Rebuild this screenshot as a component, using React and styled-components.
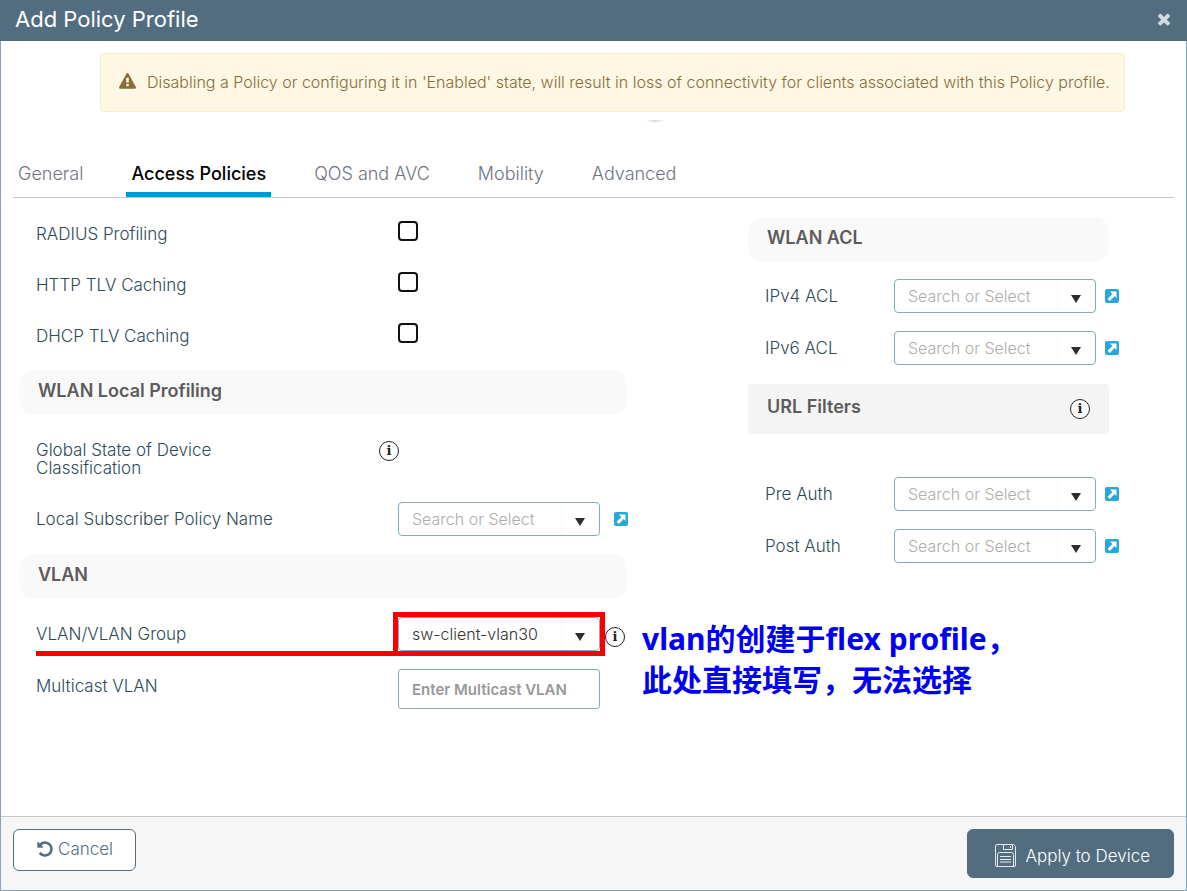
import React from "react";
import styled, { createGlobalStyle } from "styled-components";

const GlobalStyle = createGlobalStyle`
  *, *::before, *::after { box-sizing: border-box; }
  body { margin: 0; background: #fff; font-family: Inter, "Noto Sans CJK SC", sans-serif; font-weight: 300; }
  button, input, select { font: inherit; margin: 0; }
`;

const Dialog = styled.div`
  min-height: 100vh;
  display: flex;
  flex-direction: column;
  border: 1px solid #8aa1ba;
  border-top: 0;
`;

const Header = styled.header`
  height: 41px;
  margin: 0 -1px;
  padding: 0 14px 4px 15px;
  display: flex;
  align-items: center;
  justify-content: space-between;
  background: #526d80;
  color: #fff;
`;

const Title = styled.h1`
  margin: 0;
  font-size: 22px;
  line-height: 28px;
  font-weight: 400;
`;

const CloseButton = styled.button`
  border: 0;
  padding: 0;
  display: flex;
  background: none;
  color: #d3dae0;
  cursor: pointer;
`;

const Alert = styled.div`
  margin: 12px 61px 0 99px;
  min-height: 59px;
  padding: 0 10px 2px 18px;
  display: flex;
  align-items: center;
  gap: 11px;
  border: 1px solid #faebcc;
  border-radius: 4px;
  background: #fdf7e3;
  color: #8a6d3b;
  font-size: 16px;
  line-height: 24px;

  svg { flex: none; }
`;

const PullHandle = styled.div`
  width: 20px;
  height: 3px;
  margin: 8px 0 35px 644px;
  background: radial-gradient(ellipse at top, #cfcfcf, #fff 70%);
`;

const Tabs = styled.nav`
  margin: 0 12px;
  display: flex;
  gap: 38px;
  border-bottom: 1px solid #c4c7cb;
`;

const Tab = styled.a`
  height: 39px;
  padding: 0 5px;
  border-bottom: 5px solid ${(p) => (p.$active ? "#0096d6" : "transparent")};
  color: ${(p) => (p.$active ? "#000" : "#6f7580")};
  font-size: 18px;
  line-height: 32px;
  font-weight: ${(p) => (p.$active ? 500 : 300)};
  text-decoration: none;
`;

const Content = styled.main`
  flex: 1;
  padding: 0 67px 0 18px;
  display: grid;
  grid-template-columns: minmax(0, 608fr) minmax(0, 371fr);
  gap: 121px;
  align-items: start;
`;

const Column = styled.div`
  display: flex;
  flex-direction: column;
  padding-top: ${(p) => p.$top}px;
`;

const Section = styled.h2`
  margin: ${(p) => p.$margin};
  height: ${(p) => (p.$square ? 50 : 45)}px;
  padding: ${(p) => (p.$square ? 12 : 10)}px 19px 0;
  display: flex;
  justify-content: space-between;
  align-items: flex-start;
  border-radius: ${(p) => (p.$square ? 4 : 15)}px;
  background: ${(p) => (p.$square ? "#f4f4f4" : "#f9f9f9")};
  color: #5d5b5b;
  font-size: 18px;
  line-height: 22px;
  font-weight: 600;
`;

const Row = styled.div`
  position: relative;
  display: grid;
  grid-template-columns: ${(p) => (p.$narrow ? 129 : 362)}px 202px auto;
  justify-content: start;
  min-height: 34px;
  padding-left: 17px;
  align-items: ${(p) => p.$align || "center"};
`;

const CheckRow = styled(Row)`
  height: 51px;
`;

const StateRow = styled(Row)`
  grid-template-columns: 343px auto;
  min-height: 61px;
`;

const Stack = styled.div`
  display: grid;
  gap: 18px;
`;

const Label = styled.label`
  max-width: 245px;
  padding-top: ${(p) => p.$top || 0}px;
  color: #2f4a57;
  font-size: 17px;
  line-height: 18px;
`;

const Check = styled.input`
  appearance: none;
  width: 20px;
  height: 20px;
  margin-bottom: 6px;
  border: 2px solid #111;
  border-radius: 4px;
  background: #fff;
`;

const Field = styled.div`
  position: relative;
`;

const Select = styled.select`
  display: block;
  appearance: none;
  width: 100%;
  height: 34px;
  padding: 0 40px 0 13px;
  border: 1px solid #85aabd;
  border-radius: 4px;
  background: linear-gradient(#f9f9f9, #f9f9f9) 162px 0 / 1px 100% no-repeat #fff;
  color: ${(p) => (p.$filled ? "#333" : "#adadad")};
  font-size: 16px;
`;

const Arrow = styled.span`
  position: absolute;
  right: 15px;
  top: 16px;
  border: 5px solid transparent;
  border-top: 8px solid #2d2d2d;
  border-bottom: 0;
  pointer-events: none;
`;

const TextInput = styled.input`
  width: 100%;
  height: 40px;
  padding: 0 13px;
  border: 1px solid #85aabd;
  border-radius: 3px;
  background: #fff;
  font-size: 15px;
  &::placeholder { color: #999; opacity: 1; font-weight: 600; }
`;

const IconLink = styled.a`
  display: flex;
  width: 14px;
  margin-left: ${(p) => (p.$narrow ? 9 : 14)}px;
`;

const InfoButton = styled.button`
  width: 20px;
  height: 20px;
  padding: 0;
  border: 1px solid #222;
  border-radius: 50%;
  background: #fff;
  color: #222;
  font: bold 13px/16px "DejaVu Serif", serif;
`;

const SectionInfo = styled(InfoButton)`
  margin-top: 3px;
`;

const VlanInfo = styled(InfoButton)`
  margin: 6px 0 0 5px;
`;

const Highlight = styled.span`
  position: absolute;
  inset: -5px;
  border: 5px solid #fb0000;
  pointer-events: none;
`;

const Underline = styled.span`
  position: absolute;
  left: 17px;
  bottom: -5px;
  width: 362px;
  height: 5px;
  background: #fb0000;
`;

const Note = styled.p`
  position: absolute;
  left: 623px;
  top: 1px;
  margin: 0;
  color: #0000f8;
  font: bold 30px/41px "Noto Sans", "Noto Sans CJK SC", sans-serif;
  white-space: nowrap;
`;

const Footer = styled.footer`
  padding: 12px;
  display: flex;
  justify-content: space-between;
  align-items: flex-start;
  border-top: 1px solid #c4c7cb;
  background: #f6f6f6;
`;

const Button = styled.button`
  height: ${(p) => (p.$primary ? 49 : 42)}px;
  padding: ${(p) => (p.$primary ? "4px 23px 0 27px" : "0 22px 2px")};
  display: flex;
  align-items: center;
  gap: ${(p) => (p.$primary ? 10 : 4)}px;
  border: 1px solid #526d80;
  border-radius: 6px;
  background: ${(p) => (p.$primary ? "#526d80" : "#fff")};
  color: ${(p) => (p.$primary ? "#fff" : "#526d80")};
  font-size: 17px;
  line-height: 22px;

  svg { flex: none; }
`;

const FaIcon = ({ size, d }) => (
  <svg width={size} height={size} viewBox="0 0 1792 1792" fill="currentColor" aria-hidden="true">
    <path d={d} />
  </svg>
);

const TIMES =
  "M1490 1322q0 40-28 68l-136 136q-28 28-68 28t-68-28l-294-294-294 294q-28 28-68 28t-68-28l-136-136q-28-28-28-68t28-68l294-294-294-294q-28-28-28-68t28-68l136-136q28-28 68-28t68 28l294 294 294-294q28-28 68-28t68 28l136 136q28 28 28 68t-28 68l-294 294 294 294q28 28 28 68z";
const UNDO =
  "M1664 896q0 156-61 298t-164 245-245 164-298 61q-172 0-327-72.5t-264-204.5q-7-10-6.5-22.5t8.5-20.5l137-138q10-9 25-9 16 2 23 12 73 95 179 147t225 52q104 0 198.5-40.5t163.5-109.5 109.5-163.5 40.5-198.5-40.5-198.5-109.5-163.5-163.5-109.5-198.5-40.5q-98 0-188 35.5t-160 101.5l137 138q31 30 14 69-17 40-59 40h-448q-26 0-45-19t-19-45v-448q0-42 40-59 39-17 69 14l130 129q107-101 244.5-156.5t284.5-55.5q156 0 298 61t245 164 164 245 61 298z";
const WARNING =
  "M1024 1375v-190q0-14-9.5-23.5t-22.5-9.5h-192q-13 0-22.5 9.5t-9.5 23.5v190q0 14 9.5 23.5t22.5 9.5h192q13 0 22.5-9.5t9.5-23.5zm-2-374l18-459q0-12-10-19-13-11-24-11h-220q-11 0-24 11-10 7-10 21l17 457q0 10 10 16.5t24 6.5h185q14 0 23.5-6.5t10.5-16.5zm-14-934l768 1408q35 63-2 126-17 29-46.5 46t-63.5 17h-1536q-34 0-63.5-17t-46.5-46q-37-63-2-126l768-1408q17-31 47-49t65-18 65 18 47 49z";

const OpenLink = ({ label, narrow }) => (
  <IconLink href="#" aria-label={label} $narrow={narrow}>
    <svg width="14" height="14" viewBox="0 0 14 14" aria-hidden="true">
      <rect width="14" height="14" rx="2" fill="#28a8d8" />
      <path d="M5 2.500h6.500V9L9.600 7.100l-4.800 4.800-2.200-2.200 4.800-4.800z" fill="#fff" />
    </svg>
  </IconLink>
);

const SaveIcon = () => (
  <svg width="21" height="23" viewBox="0 0 21 23" fill="none" stroke="#e6ebee" aria-hidden="true">
    <path d="M.5 2a1.500 1.500 0 0 1 1.500-1.500H18.500L20.500 2.500V21a1.500 1.500 0 0 1-1.500 1.500H2A1.500 1.500 0 0 1 .5 21z" />
    <path d="M8.500.5v5h9V.5M15.500 2v2M2.500 22V10.500a2 2 0 0 1 2-2h12a2 2 0 0 1 2 2V22M5 12.500h11M5 15.500h11M5 18h11" />
  </svg>
);

const Combo = ({ id, value, children }) => (
  <Field>
    <Select id={id} $filled={!!value}>
      <option>{value || "Search or Select"}</option>
    </Select>
    <Arrow />
    {children}
  </Field>
);

const ComboRow = ({ id, label, narrow }) => (
  <Row $narrow={narrow}>
    <Label htmlFor={id}>{label}</Label>
    <Combo id={id} />
    <OpenLink label={`Open ${label}`} narrow={narrow} />
  </Row>
);

const TABS = ["General", "Access Policies", "QOS and AVC", "Mobility", "Advanced"];
const CHECKS = ["RADIUS Profiling", "HTTP TLV Caching", "DHCP TLV Caching"];

export default function App() {
  return (
    <>
      <GlobalStyle />
      <Dialog role="dialog" aria-label="Add Policy Profile">
        <Header>
          <Title>Add Policy Profile</Title>
          <CloseButton aria-label="Close"><FaIcon size={18} d={TIMES} /></CloseButton>
        </Header>
        <Alert role="alert">
          <FaIcon size={17} d={WARNING} />
          <span>Disabling a Policy or configuring it in 'Enabled' state, will result in loss of connectivity for clients associated with this Policy profile.</span>
        </Alert>
        <PullHandle />
        <Tabs>
          {TABS.map((t, i) => (
            <Tab key={t} href="#" $active={i === 1}>{t}</Tab>
          ))}
        </Tabs>
        <Content>
          <Column $top={10}>
            {CHECKS.map((t, i) => (
              <CheckRow key={t}>
                <Label htmlFor={`check${i}`}>{t}</Label>
                <Check id={`check${i}`} type="checkbox" />
              </CheckRow>
            ))}
            <Section $margin="9px 0 26px">WLAN Local Profiling</Section>
            <StateRow $align="start">
              <Label as="span">Global State of Device Classification</Label>
              <InfoButton aria-label="About device classification">i</InfoButton>
            </StateRow>
            <ComboRow id="subscriber" label="Local Subscriber Policy Name" />
            <Section $margin="18px 0">VLAN</Section>
            <Stack>
              <Row>
                <Label htmlFor="vlan">VLAN/VLAN Group</Label>
                <Combo id="vlan" value="sw-client-vlan30"><Highlight /></Combo>
                <VlanInfo aria-label="About VLAN group">i</VlanInfo>
                <Underline />
                <Note>vlan的创建于flex profile，<br />此处直接填写，无法选择</Note>
              </Row>
              <Row $align="start">
                <Label htmlFor="multicast" $top={8}>Multicast VLAN</Label>
                <TextInput id="multicast" placeholder="Enter Multicast VLAN" />
              </Row>
            </Stack>
          </Column>
          <Column $top={19}>
            <Section $margin="0 10px 17px 0">WLAN ACL</Section>
            <Stack>
              <ComboRow id="ipv4" label="IPv4 ACL" narrow />
              <ComboRow id="ipv6" label="IPv6 ACL" narrow />
            </Stack>
            <Section $square $margin="19px 10px 43px 0">
              URL Filters
              <SectionInfo aria-label="About URL filters">i</SectionInfo>
            </Section>
            <Stack>
              <ComboRow id="pre" label="Pre Auth" narrow />
              <ComboRow id="post" label="Post Auth" narrow />
            </Stack>
          </Column>
        </Content>
        <Footer>
          <Button><FaIcon size={18} d={UNDO} />Cancel</Button>
          <Button $primary><SaveIcon />Apply to Device</Button>
        </Footer>
      </Dialog>
    </>
  );
}
